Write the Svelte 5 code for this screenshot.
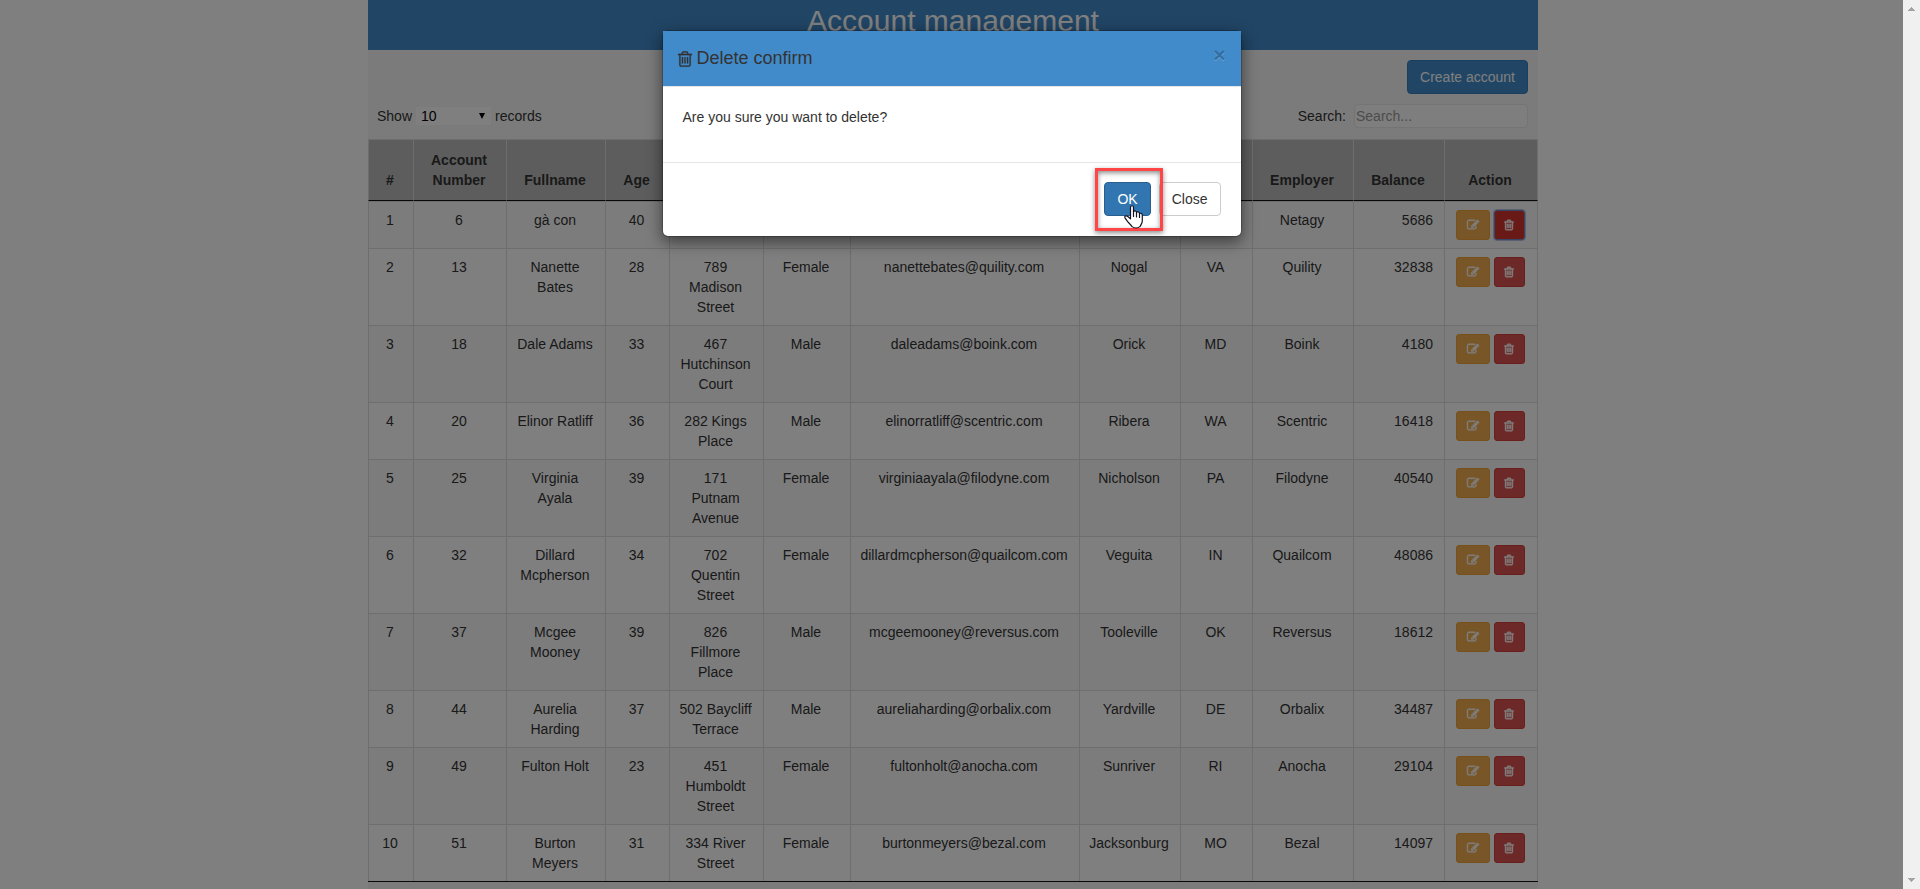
<script>
  const columns = ['#', 'Account Number', 'Fullname', 'Age', 'Address', 'Gender', 'Email', 'City', 'State', 'Employer', 'Balance', 'Action'];
  const widths = [45, 93, 99, 64, 94, 87, 229, 101, 72, 101, 91, 94];

  const rows = [
    [1, 6, 'gà con', 40, '', '', '', '', '', 'Netagy', 5686],
    [2, 13, 'Nanette Bates', 28, '789 Madison Street', 'Female', 'nanettebates@quility.com', 'Nogal', 'VA', 'Quility', 32838],
    [3, 18, 'Dale Adams', 33, '467 Hutchinson Court', 'Male', 'daleadams@boink.com', 'Orick', 'MD', 'Boink', 4180],
    [4, 20, 'Elinor Ratliff', 36, '282 Kings Place', 'Male', 'elinorratliff@scentric.com', 'Ribera', 'WA', 'Scentric', 16418],
    [5, 25, 'Virginia Ayala', 39, '171 Putnam Avenue', 'Female', 'virginiaayala@filodyne.com', 'Nicholson', 'PA', 'Filodyne', 40540],
    [6, 32, 'Dillard Mcpherson', 34, '702 Quentin Street', 'Female', 'dillardmcpherson@quailcom.com', 'Veguita', 'IN', 'Quailcom', 48086],
    [7, 37, 'Mcgee Mooney', 39, '826 Fillmore Place', 'Male', 'mcgeemooney@reversus.com', 'Tooleville', 'OK', 'Reversus', 18612],
    [8, 44, 'Aurelia Harding', 37, '502 Baycliff Terrace', 'Male', 'aureliaharding@orbalix.com', 'Yardville', 'DE', 'Orbalix', 34487],
    [9, 49, 'Fulton Holt', 23, '451 Humboldt Street', 'Female', 'fultonholt@anocha.com', 'Sunriver', 'RI', 'Anocha', 29104],
    [10, 51, 'Burton Meyers', 31, '334 River Street', 'Female', 'burtonmeyers@bezal.com', 'Jacksonburg', 'MO', 'Bezal', 14097]
  ];

  let pageSize = $state('10');
  let search = $state('');
</script>

{#snippet trash()}
  <svg class="icon" viewBox="0 0 1792 1792" aria-hidden="true"><path d="M704 736v576q0 14-9 23t-23 9h-64q-14 0-23-9t-9-23v-576q0-14 9-23t23-9h64q14 0 23 9t9 23zm256 0v576q0 14-9 23t-23 9h-64q-14 0-23-9t-9-23v-576q0-14 9-23t23-9h64q14 0 23 9t9 23zm256 0v576q0 14-9 23t-23 9h-64q-14 0-23-9t-9-23v-576q0-14 9-23t23-9h64q14 0 23 9t9 23zm128 724v-948h-896v948q0 22 7 40.5t14.5 27 10.5 8.5h832q3 0 10.5-8.5t14.5-27 7-40.5zm-672-1076h448l-48-117q-7-9-17-11h-317q-10 2-17 11zm928 32v64q0 14-9 23t-23 9h-96v948q0 83-47 143.5t-113 60.5h-832q-66 0-113-58.5t-47-141.5v-952h-96q-14 0-23-9t-9-23v-64q0-14 9-23t23-9h309l70-167q15-37 54-63t79-26h320q40 0 79 26t54 63l70 167h309q14 0 23 9t9 23z" /></svg>
{/snippet}

{#snippet pencil()}
  <svg class="icon" viewBox="0 0 1792 1792" aria-hidden="true"><path d="M888 1184l116-116-152-152-116 116v56h96v96h56zm440-720q-16-16-33 1l-350 350q-17 17-1 33t33-1l350-350q17-17 1-33zm80 594v190q0 119-84.5 203.5t-203.5 84.5h-832q-119 0-203.5-84.5t-84.5-203.5v-832q0-119 84.5-203.5t203.5-84.5h832q63 0 117 25 15 7 18 23 3 17-9 29l-49 49q-14 14-32 8-23-6-45-6h-832q-66 0-113 47t-47 113v832q0 66 47 113t113 47h832q66 0 113-47t47-113v-126q0-13 9-22l64-64q15-15 35-7t20 29zm-96-738l288 288-672 672h-288v-288zm444 132l-92 92-288-288 92-92q28-28 68-28t68 28l152 152q28 28 28 68t-28 68z" /></svg>
{/snippet}

<div class="window">
  <div class="page">
    <main class="container">
      <header class="title"><h1>Account management</h1></header>
      <div class="toolbar">
        <div class="create"><button class="btn primary" type="button">Create account</button></div>
        <div class="filters">
          <div class="length">
            <label for="page-size">Show</label>
            <span class="select">
              <select id="page-size" bind:value={pageSize}>
                <option>10</option>
                <option>25</option>
                <option>50</option>
                <option>100</option>
              </select>
              <svg class="caret" viewBox="0 0 6 6" aria-hidden="true"><path d="M0 0h6L3 6z" /></svg>
            </span>
            <label for="page-size">records</label>
          </div>
          <div class="search">
            <label for="search">Search:</label>
            <input id="search" type="text" placeholder="Search..." bind:value={search} />
          </div>
        </div>
      </div>
      <table>
        <colgroup>
          {#each widths as width}<col style:width="{width / 11.7}%" />{/each}
        </colgroup>
        <thead>
          <tr>{#each columns as column}<th scope="col">{column}</th>{/each}</tr>
        </thead>
        <tbody>
          {#each rows as row, r}
            <tr>
              {#each row as cell, c}<td class:number={c === 10}>{cell}</td>{/each}
              <td class="actions">
                <div class="buttons">
                  <button class="edit" type="button" aria-label="Edit">{@render pencil()}</button>
                  <button class="delete" class:active={r === 0} type="button" aria-label="Delete">{@render trash()}</button>
                </div>
              </td>
            </tr>
          {/each}
        </tbody>
      </table>
    </main>

    <div class="backdrop">
      <div class="dialog" role="dialog" aria-modal="true" aria-labelledby="dialog-title">
        <div class="dialog-header">
          <h4 id="dialog-title">{@render trash()}<span>Delete confirm</span></h4>
          <button class="close" type="button" aria-label="Close dialog">×</button>
        </div>
        <div class="dialog-body"><p>Are you sure you want to delete?</p></div>
        <div class="dialog-footer">
          <div class="confirm">
            <button class="btn primary pressed" type="button">OK</button>
            <span class="marker"></span>
            <svg class="pointer" viewBox="0 0 19 24" aria-hidden="true">
              <path d="M6.5 13.8V2.4C6.5.2 9.5.2 9.5 2.4V6.5C10.4 5.5 12.4 5.9 12.5 7.4C13.6 6.5 15.4 7 15.5 8.5C16.6 7.9 18.3 8.4 18.3 10V15.8C18.3 18.5 16.8 19.6 16.2 21.4C13.8 23.4 10.2 23.4 7.8 21.4C6.8 19.6 4.6 18 3.3 16.2L1 12.8C.1 11.2 2.2 10.2 3.5 11.3Z" />
              <path d="M9.5 6v5.5M12.5 7.5v4.5M15.5 8.5v4" />
            </svg>
          </div>
          <button class="btn default" type="button">Close</button>
        </div>
      </div>
    </div>
  </div>

  <div class="scrollbar" aria-hidden="true">
    <svg viewBox="0 0 7 4" shape-rendering="crispEdges"><path d="M3 0h1v1h1v1h1v1h1v1H0V3h1V2h1V1h1z" /></svg>
    <svg viewBox="0 0 7 4" shape-rendering="crispEdges"><path d="M0 0h7v1H6v1H5v1H4v1H3V3H2V2H1V1H0z" /></svg>
  </div>
</div>

<style>
  :global(body) {
    margin: 0;
  }

  .window {
    display: flex;
    height: 100vh;
    overflow: hidden;
    font-family: "Liberation Sans", Arial, sans-serif;
    font-size: 14px;
    line-height: 20px;
    color: #333;
    background: #fff;
  }

  .window * {
    box-sizing: border-box;
  }

  button,
  input,
  select {
    font: inherit;
    color: inherit;
    margin: 0;
  }

  .page {
    position: relative;
    flex: 1;
    display: flex;
    justify-content: center;
    padding-left: 3px;
    overflow: hidden;
  }

  .container {
    width: 100%;
    max-width: 1170px;
    flex-shrink: 0;
    background: #f7f7f7;
  }

  .title {
    padding: 4px 0 13px;
    background: #428bca;
    color: #fff;
    text-align: center;
  }

  h1 {
    margin: 0;
    font-size: 30px;
    line-height: 33px;
    font-weight: 400;
  }

  .toolbar {
    display: flex;
    flex-direction: column;
    gap: 10px;
    padding: 10px 10px 11px 9px;
  }

  .create {
    display: flex;
    justify-content: flex-end;
  }

  .filters,
  .length,
  .search {
    display: flex;
    align-items: center;
  }

  .filters {
    justify-content: space-between;
  }

  .length {
    gap: 4px;
  }

  .search {
    gap: 8px;
  }

  .select {
    position: relative;
    display: flex;
  }

  select {
    appearance: none;
    width: 75px;
    height: 18px;
    padding: 0 5px;
    border: 0;
    line-height: 18px;
    background: #fff;
    color: #000;
  }

  .caret {
    position: absolute;
    right: 6px;
    top: 6px;
    width: 6px;
    height: 6px;
    pointer-events: none;
  }

  input {
    width: 174px;
    height: 24px;
    padding: 0 1px;
    border: 1px solid #e9e9e9;
    border-radius: 4px;
    background: #fdfdfd;
  }

  input::placeholder {
    color: #999;
    opacity: 1;
  }

  .btn {
    height: 34px;
    padding: 6px 12px;
    border: 1px solid;
    border-radius: 4px;
    line-height: 20px;
  }

  .primary {
    background: #428bca;
    border-color: #357ebd;
    color: #fff;
  }

  .pressed {
    background: #3276b1;
    border-color: #285e8e;
  }

  .default {
    background: #fff;
    border-color: #ccc;
    color: #333;
  }

  table {
    width: 100%;
    table-layout: fixed;
    border-collapse: separate;
    border-spacing: 0;
    border-bottom: 1px solid #111;
    background: #fff;
  }

  th,
  td {
    border-top: 1px solid #ddd;
    border-left: 1px solid #ddd;
    text-align: center;
  }

  th:last-child,
  td:last-child {
    border-right: 1px solid #ddd;
  }

  th {
    padding: 10px 11px 10px 9px;
    border-bottom: 1px solid #111;
    background: #bbb;
    vertical-align: bottom;
  }

  td {
    padding: 8px 11px 8px 9px;
    vertical-align: top;
  }

  tbody tr:nth-child(odd) {
    background: #f9f9f9;
  }

  .number {
    text-align: right;
  }

  .buttons {
    display: flex;
    justify-content: center;
    gap: 4px;
  }

  .edit,
  .delete {
    display: flex;
    align-items: center;
    justify-content: center;
    height: 30px;
    padding: 0;
    border: 1px solid;
    border-radius: 3px;
    color: #fff;
  }

  .edit {
    width: 34px;
    background: #f0ad4e;
    border-color: #eea236;
  }

  .delete {
    width: 31px;
    background: #d9534f;
    border-color: #d43f3a;
  }

  .delete.active {
    background: #d2322d;
    border-color: #7088c8;
    outline: 1px solid rgba(112, 136, 200, 0.5);
  }

  .icon {
    width: 12px;
    height: 12px;
    fill: currentColor;
    overflow: visible;
  }

  .buttons .icon {
    stroke: currentColor;
    stroke-width: 70;
  }

  .backdrop {
    position: absolute;
    inset: 0;
    display: flex;
    justify-content: center;
    align-items: flex-start;
    padding-top: 30px;
    background: rgba(0, 0, 0, 0.5);
  }

  .dialog {
    width: 580px;
    border: 1px solid rgba(0, 0, 0, 0.2);
    border-radius: 6px;
    background: #fff;
    background-clip: padding-box;
    box-shadow: 0 5px 15px rgba(0, 0, 0, 0.5);
  }

  .dialog-header {
    display: flex;
    justify-content: space-between;
    align-items: flex-start;
    padding: 15px 15px 15px 13px;
    background: #428bca;
    border-bottom: 1px solid #e5e5e5;
  }

  h4 {
    display: flex;
    align-items: center;
    gap: 3px;
    margin: 0;
    font-size: 18px;
    line-height: 25px;
    font-weight: 400;
  }

  h4 .icon {
    width: 18px;
    height: 18px;
    stroke: currentColor;
    stroke-width: 20;
  }

  .close {
    padding: 0;
    border: 0;
    background: none;
    color: #000;
    font-size: 21px;
    line-height: 17px;
    font-weight: 700;
    text-shadow: 0 1px 0 #fff;
    opacity: 0.2;
  }

  .dialog-body {
    padding: 20px;
  }

  p {
    margin: 0 0 15px;
  }

  .dialog-footer {
    display: flex;
    justify-content: flex-end;
    gap: 8px;
    padding: 19px 20px 20px;
    border-top: 1px solid #e5e5e5;
  }

  .confirm {
    position: relative;
  }

  .marker {
    position: absolute;
    inset: -14px -12px -15px -9px;
    border: 3px solid #ff4545;
    box-shadow: 0 2px 5px rgba(0, 0, 0, 0.45), inset 0 2px 5px rgba(0, 0, 0, 0.45);
    pointer-events: none;
  }

  .pointer {
    position: absolute;
    left: 20px;
    top: 23px;
    width: 19px;
    height: 24px;
    fill: #fff;
    stroke: #111122;
    stroke-width: 1.2;
    stroke-linejoin: round;
    stroke-linecap: round;
    pointer-events: none;
  }

  .scrollbar {
    display: flex;
    flex-direction: column;
    justify-content: space-between;
    align-items: center;
    width: 17px;
    padding: 7px 0;
    background: #f0f0f0;
  }

  .scrollbar svg {
    width: 7px;
    height: 4px;
    fill: #a3a3a3;
  }
</style>
